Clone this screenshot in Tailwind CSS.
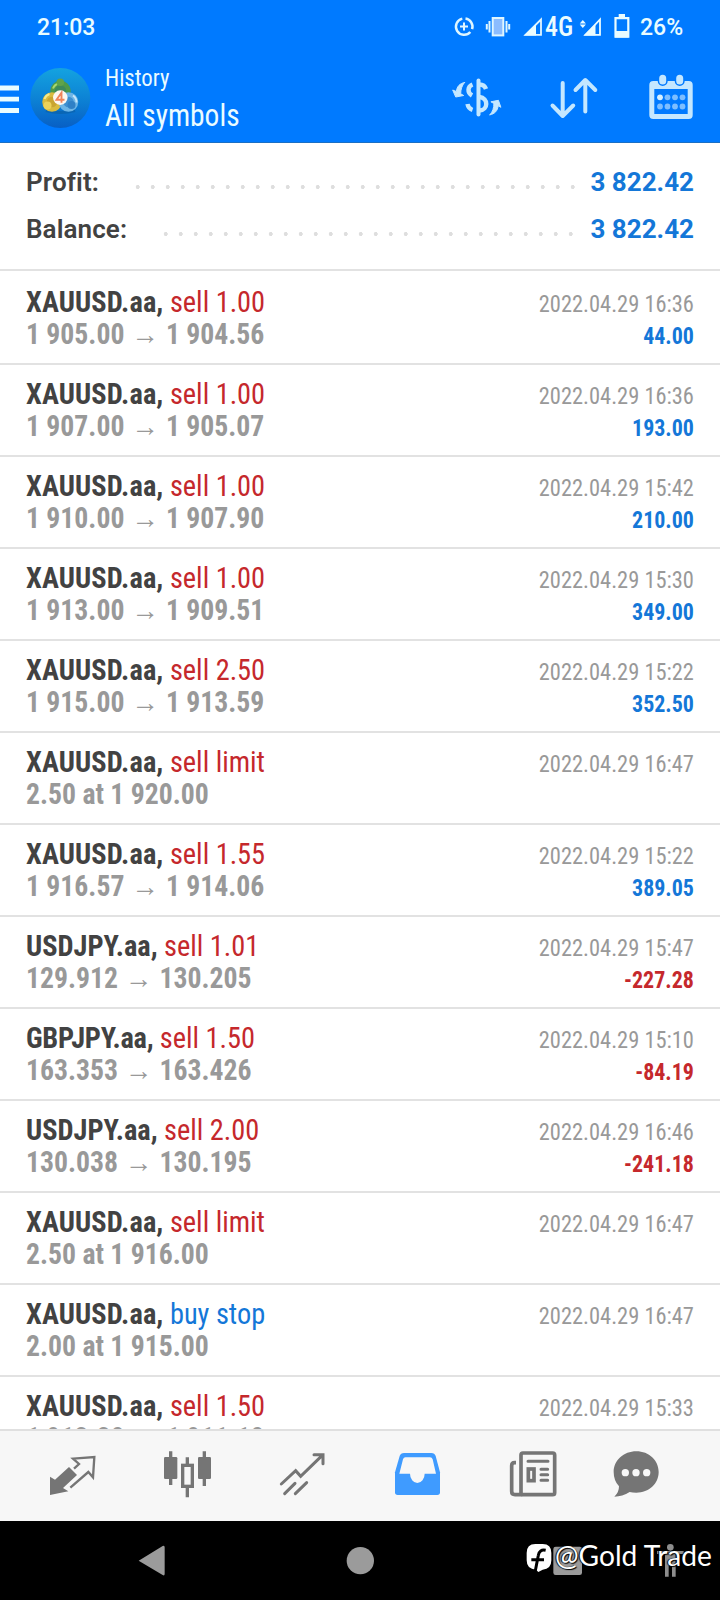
<!DOCTYPE html>
<html lang="en">
<head>
<meta charset="utf-8">
<title>History</title>
<script src="https://cdn.jsdelivr.net/npm/@tailwindcss/browser@4"></script>
</head>
<body class="w-[720px] h-[1600px] overflow-hidden bg-white flex flex-col font-[Roboto,sans-serif]">

<header class="h-[143px] shrink-0 bg-[#007aff] border-b border-[#1b6fc4] text-[#eafcff] flex flex-col">
  <!-- status bar -->
  <div class="h-[54px] flex items-center text-[23px] font-medium leading-none">
    <span class="pl-[37px] w-[450px]">21:03</span>
    <svg class="w-[95px] h-[54px]" viewBox="450 0 95 54" fill="none" stroke="#dff6ff" stroke-width="2">
      <path d="M465.5 18.6a8.2 8.2 0 0 1 6.6 10.6M470.3 32a8.2 8.2 0 1 1-8-13.4" stroke-width="2.5"/>
      <path d="M464 22.5v8M460 26.5h8"/>
      <rect x="492.7" y="18" width="10.6" height="17.4" fill="#8bbcff"/>
      <path d="M489.5 21v11.5M486.8 24v5.5M506.5 21v11.5M509.2 24v5.5"/>
      <path d="M525.5 34.8H541V19.5Z" stroke-width="1.8"/>
      <path d="M524 35.5H536V24Z" fill="#eafcff" stroke="none"/>
    </svg>
    <span class="w-[33px] text-[27px] [font-stretch:75%] origin-left scale-x-[0.96]">4G</span>
    <svg class="w-[62px] h-[54px]" viewBox="578 0 62 54" fill="none" stroke="#eafcff" stroke-width="1.8">
      <path d="M579.7 23.5l3.1-3.5 3.1 3.5zM579.7 24.5l3.1 3.5 3.1-3.5z" fill="#eafcff" stroke="none"/>
      <path d="M585.5 34.8H600V19.5Z"/>
      <path d="M583.5 35.5H595.5V24Z" fill="#eafcff" stroke="none"/>
      <path d="M615.5 18.2h12.8v18.5h-12.8z" stroke-width="2.2"/>
      <path d="M618.7 14h6.3v4h-6.3zM615 31h13.5v6.5H615z" fill="#eafcff" stroke="none"/>
    </svg>
    <span>26%</span>
  </div>
  <!-- toolbar -->
  <div class="h-[88px] flex">
    <svg class="w-[105px] h-[88px]" viewBox="0 54 105 88">
      <defs>
        <linearGradient id="disc" x1="0" y1="0" x2="0" y2="1"><stop offset="0" stop-color="#14a3e0"/><stop offset=".55" stop-color="#0c80d4"/><stop offset="1" stop-color="#085fc4"/></linearGradient>
      </defs>
      <path d="M0 88h19M0 99.2h19M0 110.5h19" stroke="#eafcff" stroke-width="4.8"/>
      <circle cx="60.3" cy="98" r="30" fill="url(#disc)"/>
      <path d="M46 110.5q14 4 29 0" stroke="#075a9c" stroke-width="3" fill="none" opacity=".5"/>
      <g stroke-width="4.5">
        <circle cx="60.5" cy="91" r="8" fill="#3d8a5a" stroke="#4f9a48"/>
        <circle cx="52" cy="102" r="7.5" fill="#c9a530" stroke="#d9bb3f"/>
        <circle cx="68.5" cy="102" r="7.5" fill="#3d8fd0" stroke="#6db5e6"/>
      </g>
      <g fill="none" stroke-width="2">
        <path d="M53 88.5a8 8 0 0 1 6-5" stroke="#a8d86f"/>
        <path d="M44.5 99a8 8 0 0 1 5-5" stroke="#f7e98a"/>
        <path d="M73 95.5a8 8 0 0 1 3.5 7" stroke="#c5e6fa"/>
      </g>
      <circle cx="60.3" cy="82.3" r="3.8" fill="#5fa34a"/>
      <circle cx="47.5" cy="105.5" r="4" fill="#ecd25a"/>
      <circle cx="71.5" cy="105" r="4" fill="#2f80c6"/>
      <circle cx="60.3" cy="97.6" r="7.3" fill="#fdf7f0"/>
      <path d="M61.5 102.8v-10l-5 7h8" fill="none" stroke="#f0845a" stroke-width="1.9"/>
    </svg>
    <div class="w-[340px] flex flex-col pt-[10px] [font-stretch:75%]">
      <span class="text-[24px] leading-[28px] origin-left scale-x-[0.95]">History</span>
      <span class="text-[32px] leading-[35px] mt-[6px] origin-left scale-x-[0.92]">All symbols</span>
    </div>
    <svg class="w-[275px] h-[88px]" viewBox="445 54 275 88" fill="none" stroke="#c4e7ff" stroke-width="4" stroke-linecap="round" stroke-linejoin="round">
      <path d="M478.5 80.5v34"/>
      <path d="M479.5 84.5q5 0 6.5 4.5M479.5 97c9 1 9 13 0 13.5M472.5 84.5c-5 2-5.5 8-.5 11M467.5 104c.5 3 2 5 5 6" stroke-width="4.4" stroke-linecap="butt"/>
      <path d="M464.5 82.5c-5 1-7.5 4-8.2 9l-3.6-1.5 3 7 8-1.5-3-1.7c0-4 1-8 3.8-11.3zM490 114.8c5-1 7.5-4 8.2-9l2.7 1.5-2.5-7-7.5 1.5 3 1.7c0 4-1 8-3.9 11.3z" fill="#c4e7ff" stroke-width="1"/>
      <path d="M562.7 83v32.5M552.5 105.5l10.2 10.5 10.5-10.5M585.3 111.5V80.5M575.5 90l9.8-10 10 10"/>
      <rect x="651.8" y="83.5" width="38.4" height="33" rx="1.5" stroke-width="5"/>
      <path d="M650 83h42v6h-42z" fill="#c4e7ff" stroke="none"/>
      <path d="M662.7 78.8v2.2M679.7 78.8v2.2" stroke="#007aff" stroke-width="10"/>
      <path d="M662.7 78.3v2.6M679.7 78.3v2.6" stroke-width="7"/>
      <g stroke="none" fill="#7dbeff"><circle cx="660" cy="97.3" r="2.9" fill="#d6f0ff"/><circle cx="667.5" cy="97.3" r="2.9"/><circle cx="675" cy="97.3" r="2.9"/><circle cx="682.5" cy="97.3" r="2.9"/><circle cx="660" cy="106.5" r="2.9"/><circle cx="667.5" cy="106.5" r="2.9"/><circle cx="675" cy="106.5" r="2.9"/><circle cx="682.5" cy="106.5" r="2.9"/></g>
    </svg>
  </div>
</header>

<section class="h-[128px] shrink-0 border-b-2 border-[#e2e2e2] px-[26px] pt-[16px] text-[26px] leading-[47px] text-[#424242] flex flex-col">
  <div class="flex justify-between h-[47px]">
    <span class="font-semibold w-[104px] tracking-[0.1px]">Profit:</span>
    <span class="w-[450px] mr-auto bg-[radial-gradient(circle_at_7.7px_28px,#dedede_1.7px,transparent_2.3px)] bg-[size:15px_47px]"></span>
    <span class="font-bold text-[#1477d8]">3 822.42</span>
  </div>
  <div class="flex justify-between h-[47px]">
    <span class="font-semibold w-[132px] tracking-[0.1px]">Balance:</span>
    <span class="w-[420px] mr-auto bg-[radial-gradient(circle_at_7.7px_28px,#dedede_1.7px,transparent_2.3px)] bg-[size:15px_47px]"></span>
    <span class="font-bold text-[#1477d8]">3 822.42</span>
  </div>
</section>

<main id="deals" class="h-[1158px] shrink-0 overflow-hidden pt-[2px] [font-stretch:75%]"></main>

<nav class="h-[92px] shrink-0 bg-[#f7f7f7] border-t-2 border-[#e0e0e0] flex text-[#757575]">
  <svg class="w-[60px] h-[70px] ml-[42px]" viewBox="126 183 180 210">
    <path d="M150 320l15 9 42-38 24 24-42 39 16 10-55 11z" fill="currentColor"/>
    <path d="M222 296l15-14-18-16 64-5-4 61-14-16-54 47" fill="none" stroke="currentColor" stroke-width="7"/>
  </svg>
  <svg class="w-[60px] h-[70px] ml-[55px]" viewBox="471 183 180 210" fill="currentColor">
    <path d="M507 244h10v101h-10zM608 244h10v104h-10zM557 262h10v24h-10zM557 350h10v32h-10z"/>
    <rect x="492" y="261" width="40" height="66" rx="4"/><rect x="594" y="261" width="39" height="66" rx="4"/>
    <rect x="548" y="286" width="29" height="63" fill="none" stroke="currentColor" stroke-width="10"/>
  </svg>
  <svg class="w-[60px] h-[70px] ml-[55px]" viewBox="816 183 180 210" fill="none" stroke="currentColor" stroke-width="9" stroke-linecap="round">
    <path d="M844 342l43-40 15 17 64-62M942 254h27v27M854 371l31-31M886 371l34-33"/>
  </svg>
  <svg class="w-[60px] h-[70px] ml-[55px]" viewBox="81 183 180 210">
    <path d="M132 249h82q10 0 13 9l13 49v60q0 8-8 8H113q-8 0-8-8v-60l14-49q3-9 13-9z" fill="#3f9bff"/>
    <path d="M136 262h74q6 0 8 6l10 43h-34a22 28 0 0 1-44 0h-32l11-43q2-6 7-6z" fill="#f7f7f7"/>
  </svg>
  <svg class="w-[60px] h-[70px] ml-[56px]" viewBox="429 183 180 210" fill="none" stroke="currentColor" stroke-width="11">
    <rect x="483" y="249" width="101" height="125" rx="6"/>
    <path d="M468 278h-4q-9 0-9 9v77q0 10 10 10h22"/>
    <path d="M504 274h60M543 298h20M543 314h20M543 331h20" stroke-width="9" stroke-linecap="round"/>
    <rect x="505" y="297" width="17" height="35"/>
  </svg>
  <svg class="w-[60px] h-[70px] ml-[43px]" viewBox="738 183 180 210">
    <path d="M829 244c38 0 67 27 67 62s-29 62-67 62q-12 0-20-2-22 14-46 14 14-12 14-31-16-17-16-43c0-35 30-62 68-62z" fill="currentColor"/>
    <g fill="#f7f7f7"><circle cx="796" cy="308" r="11"/><circle cx="828" cy="308" r="11"/><circle cx="860" cy="308" r="11"/></g>
  </svg>
</nav>

<footer class="h-[79px] shrink-0 bg-black relative">
  <svg class="w-[720px] h-[79px]" viewBox="0 453 2160 237" fill="#9b9b9b">
    <path d="M416 572l72-44q6-3 6 4v79q0 8-6 4z"/>
    <circle cx="1081" cy="572" r="41"/>
    <rect x="1660" y="530" width="86" height="85" rx="7"/>
    <g fill="#8d8d8d"><circle cx="2011" cy="532" r="10"/><path d="M1971 543h80v9h-24v68h-11v-34h-10v34h-11v-68h-24z"/></g>
    <path d="M1606 522h22q26 0 26 27v22q0 26-26 28l-13 7-7-7q-28-1-28-28v-22q0-27 26-27z" fill="#fff"/>
    <path d="M1637 541q-19-4-22 15l-9 46M1594 569h38" fill="none" stroke="#000" stroke-width="9"/>
  </svg>
  <span class="absolute left-[555px] top-[14px] text-[28px] leading-[40px] whitespace-nowrap text-white font-[Lato] [text-shadow:1px_1px_1px_#000,-1px_0_1px_#000] origin-left scale-x-[1.005]">@Gold Trade</span>
</footer>

<script>
const deals = [
  ['XAUUSD.aa', 'sell 1.00', '1 905.00', '1 904.56', '2022.04.29 16:36', '44.00'],
  ['XAUUSD.aa', 'sell 1.00', '1 907.00', '1 905.07', '2022.04.29 16:36', '193.00'],
  ['XAUUSD.aa', 'sell 1.00', '1 910.00', '1 907.90', '2022.04.29 15:42', '210.00'],
  ['XAUUSD.aa', 'sell 1.00', '1 913.00', '1 909.51', '2022.04.29 15:30', '349.00'],
  ['XAUUSD.aa', 'sell 2.50', '1 915.00', '1 913.59', '2022.04.29 15:22', '352.50'],
  ['XAUUSD.aa', 'sell limit', '2.50 at 1 920.00', '', '2022.04.29 16:47', ''],
  ['XAUUSD.aa', 'sell 1.55', '1 916.57', '1 914.06', '2022.04.29 15:22', '389.05'],
  ['USDJPY.aa', 'sell 1.01', '129.912', '130.205', '2022.04.29 15:47', '-227.28'],
  ['GBPJPY.aa', 'sell 1.50', '163.353', '163.426', '2022.04.29 15:10', '-84.19'],
  ['USDJPY.aa', 'sell 2.00', '130.038', '130.195', '2022.04.29 16:46', '-241.18'],
  ['XAUUSD.aa', 'sell limit', '2.50 at 1 916.00', '', '2022.04.29 16:47', ''],
  ['XAUUSD.aa', 'buy stop', '2.00 at 1 915.00', '', '2022.04.29 16:47', ''],
  ['XAUUSD.aa', 'sell 1.50', '1 912.20', '1 911.10', '2022.04.29 15:33', ''],
];
const tracking = { XAUUSD: 'tracking-[0.1px]', USDJPY: 'tracking-normal', GBPJPY: 'tracking-[-0.3px]' };
const arrow = '<span class="inline-block w-[44px] text-center text-[29px] font-normal leading-none">→</span>';
document.getElementById('deals').innerHTML = deals.map(([sym, type, a, b, time, sum]) => `
  <div class="h-[92px] border-b-2 border-[#e2e2e2] px-[26px] pt-[13px] flex justify-between">
    <div class="text-[30px] leading-[32px] whitespace-nowrap origin-left scale-x-[0.945]">
      <div class="h-[32px] text-[#424242]"><b class="font-bold ${tracking[sym.slice(0, 6)]}">${sym},</b> <span class="${type[0] === 'b' ? 'text-[#1477d8]' : 'text-[#c5282c]'}">${type}</span></div>
      <div class="h-[32px] text-[29.3px] font-bold text-[#999999]">${a}${b ? arrow + b : ''}</div>
    </div>
    <div class="text-[24px] leading-[32px] text-right pt-[2px] whitespace-nowrap origin-right scale-x-[0.935]">
      <div class="h-[32px] text-[#999999]">${time}</div>
      <div class="h-[32px] text-[23.5px] font-bold ${sum[0] === '-' ? 'text-[#c5282c]' : 'text-[#1477d8]'}">${sum}</div>
    </div>
  </div>`).join('');
</script>
</body>
</html>
